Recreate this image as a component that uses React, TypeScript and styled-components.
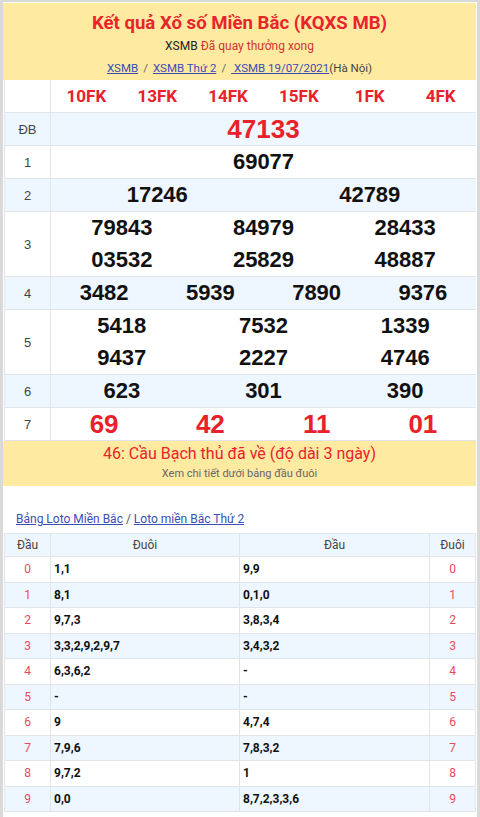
import React from "react";
import styled, { createGlobalStyle } from "styled-components";

const GlobalStyle = createGlobalStyle`
  *, *::before, *::after { box-sizing: border-box; }
  html, body { margin: 0; padding: 0; background: #fff; }
  body { font-family: "Liberation Sans", Arial, sans-serif; }
`;

const Frame = styled.div`
  width: 480px;
  min-height: 817px;
  border-left: 3px solid #d9d9d9;
  border-right: 3px solid #d9d9d9;
  border-top: 2px solid #d9d9d9;
  padding: 1px 1px 0 0;
`;

const Yellow = styled.div`
  background: #ffeaa2;
  text-align: center;
  font-family: Roboto, "Liberation Sans", sans-serif;
`;

const Header = styled(Yellow)`
  height: 77px;
  padding-top: 9px;
`;

const Title = styled.h1`
  margin: 0;
  font-size: 18.6px;
  font-weight: bold;
  line-height: 22px;
  color: #e8242c;
`;

const Sub = styled.div`
  margin-top: 4px;
  font-size: 12px;
  line-height: 16px;
  color: #222;
  span { color: #d2342c; }
`;

const Crumbs = styled.div`
  margin-top: 6px;
  font-size: 11.5px;
  line-height: 16px;
  color: #444;
  a { color: #3c4db3; text-decoration: underline; }
`;

const Sep = styled.span`
  color: #666;
  margin: 0 5px;
`;

const Table = styled.div`
  border-left: 1px solid #e1e5ea;
  margin-left: 1px;
`;

const Row = styled.div<{ $alt?: boolean }>`
  display: grid;
  grid-template-columns: 46px 1fr;
  background: ${(p) => (p.$alt ? "#eef6ff" : "#fff")};
  border-bottom: 1px solid #e1e5ea;
`;

const Label = styled.div`
  display: flex;
  align-items: center;
  justify-content: center;
  border-right: 1px solid #e1e5ea;
  font-size: 13px;
  color: #444;
`;

const Values = styled.div<{ $cols: number }>`
  display: grid;
  grid-template-columns: repeat(${(p) => p.$cols}, 1fr);
`;

const Num = styled.div<{ $size?: number; $red?: boolean }>`
  text-align: center;
  font-weight: bold;
  font-size: ${(p) => p.$size ?? 22}px;
  line-height: 32px;
  height: 32px;
  color: ${(p) => (p.$red ? "#e8212b" : "#111")};
`;

const Code = styled.div`
  text-align: center;
  font-family: Roboto, "Liberation Sans", sans-serif;
  font-weight: bold;
  font-size: 17px;
  line-height: 32px;
  color: #e8212b;
`;

const Notice = styled(Yellow)`
  height: 45px;
  padding-top: 3px;
`;

const NoticeTitle = styled.div`
  font-size: 16px;
  line-height: 20px;
  color: #e8242c;
`;

const NoticeSub = styled.div`
  margin-top: 2px;
  font-size: 11px;
  line-height: 16px;
  color: #666;
`;

const LotoLinks = styled.div`
  padding: 26px 0 0 13px;
  height: 47px;
  font-family: Roboto, "Liberation Sans", sans-serif;
  font-size: 12px;
  color: #555;
  a { color: #3c4db3; text-decoration: underline; }
`;

const LotoTable = styled.div`
  border-left: 1px solid #e1e5ea;
  border-top: 1px solid #e1e5ea;
  margin-left: 1px;
  font-family: Roboto, "Liberation Sans", sans-serif;
`;

const LRow = styled.div<{ $alt?: boolean; $head?: boolean }>`
  display: grid;
  grid-template-columns: 46px 189px 190px 1fr;
  height: ${(p) => (p.$head ? 23 : 25.5)}px;
  background: ${(p) => (p.$alt ? "#eef6ff" : "#fff")};
  border-bottom: 1px solid #e1e5ea;
`;

const LCell = styled.div<{ $kind: "head" | "idx" | "val" }>`
  display: flex;
  align-items: center;
  justify-content: ${(p) => (p.$kind === "val" ? "flex-start" : "center")};
  padding-left: ${(p) => (p.$kind === "val" ? "3px" : "0")};
  border-right: 1px solid #e1e5ea;
  font-size: 12px;
  font-weight: ${(p) => (p.$kind === "val" ? 700 : 400)};
  color: ${(p) =>
    p.$kind === "idx" ? "#ea4a5a" : p.$kind === "head" ? "#444" : "#111"};
`;

const codes = ["10FK", "13FK", "14FK", "15FK", "1FK", "4FK"];

const rows: { label: string; cols: number; nums: string[]; size?: number; red?: boolean }[] = [
  { label: "ĐB", cols: 1, nums: ["47133"], size: 26, red: true },
  { label: "1", cols: 1, nums: ["69077"] },
  { label: "2", cols: 2, nums: ["17246", "42789"] },
  { label: "3", cols: 3, nums: ["79843", "84979", "28433", "03532", "25829", "48887"] },
  { label: "4", cols: 4, nums: ["3482", "5939", "7890", "9376"] },
  { label: "5", cols: 3, nums: ["5418", "7532", "1339", "9437", "2227", "4746"] },
  { label: "6", cols: 3, nums: ["623", "301", "390"] },
  { label: "7", cols: 4, nums: ["69", "42", "11", "01"], size: 26, red: true },
];

const loto: [string, string][] = [
  ["1,1", "9,9"],
  ["8,1", "0,1,0"],
  ["9,7,3", "3,8,3,4"],
  ["3,3,2,9,2,9,7", "3,4,3,2"],
  ["6,3,6,2", "-"],
  ["-", "-"],
  ["9", "4,7,4"],
  ["7,9,6", "7,8,3,2"],
  ["9,7,2", "1"],
  ["0,0", "8,7,2,3,3,6"],
];

export default function App() {
  return (
    <>
      <GlobalStyle />
      <Frame>
        <Header>
          <Title>Kết quả Xổ số Miền Bắc (KQXS MB)</Title>
          <Sub>
            XSMB <span>Đã quay thưởng xong</span>
          </Sub>
          <Crumbs>
            <a href="#">XSMB</a>
            <Sep>/</Sep>
            <a href="#">XSMB Thứ 2</a>
            <Sep>/</Sep>
            <a href="#"> XSMB 19/07/2021</a>(Hà Nội)
          </Crumbs>
        </Header>
        <Table>
          <Row>
            <Label />
            <Values $cols={6}>
              {codes.map((c) => (
                <Code key={c}>{c}</Code>
              ))}
            </Values>
          </Row>
          {rows.map((r, i) => (
            <Row key={r.label} $alt={i % 2 === 0}>
              <Label>{r.label}</Label>
              <Values $cols={r.cols}>
                {r.nums.map((n, j) => (
                  <Num key={j} $size={r.size} $red={r.red}>
                    {n}
                  </Num>
                ))}
              </Values>
            </Row>
          ))}
        </Table>
        <Notice>
          <NoticeTitle>46: Cầu Bạch thủ đã về (độ dài 3 ngày)</NoticeTitle>
          <NoticeSub>Xem chi tiết dưới bảng đầu đuôi</NoticeSub>
        </Notice>
        <LotoLinks>
          <a href="#">Bảng Loto Miền Bắc</a> / <a href="#">Loto miền Bắc Thứ 2</a>
        </LotoLinks>
        <LotoTable>
          <LRow $alt $head>
            <LCell $kind="head">Đầu</LCell>
            <LCell $kind="head">Đuôi</LCell>
            <LCell $kind="head">Đầu</LCell>
            <LCell $kind="head">Đuôi</LCell>
          </LRow>
          {loto.map(([a, b], i) => (
            <LRow key={i} $alt={i % 2 === 1}>
              <LCell $kind="idx">{i}</LCell>
              <LCell $kind="val">{a}</LCell>
              <LCell $kind="val">{b}</LCell>
              <LCell $kind="idx">{i}</LCell>
            </LRow>
          ))}
        </LotoTable>
      </Frame>
    </>
  );
}
